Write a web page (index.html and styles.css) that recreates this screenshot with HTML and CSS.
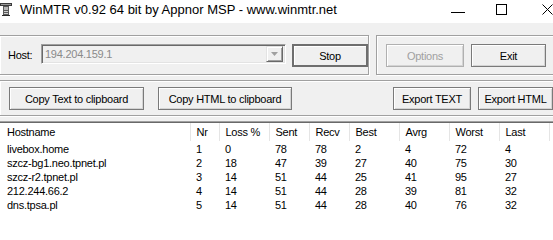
FILE: index.html
```html
<!DOCTYPE html>
<html>
<head>
<meta charset="utf-8">
<link rel="stylesheet" href="styles.css">
</head>
<body>
<div class="win">
  <div class="titlebar">
    <svg class="appicon" width="12" height="14" viewBox="0 0 12 14">
      <rect x="0" y="1" width="12" height="3" fill="#3c3c3c"/>
      <rect x="1" y="2" width="10" height="1" fill="#9a9a9a"/>
      <rect x="3" y="4" width="6" height="9" fill="#5a5a5a"/>
      <rect x="4" y="5" width="4" height="3" fill="#b8b8b8"/>
      <rect x="4" y="9" width="4" height="1" fill="#d0d0d0"/>
      <rect x="4" y="11" width="4" height="1" fill="#d0d0d0"/>
      <rect x="2" y="13" width="8" height="1" fill="#2a2a2a"/>
    </svg>
    <span class="title">WinMTR v0.92 64 bit by Appnor MSP - www.winmtr.net</span>
    <div class="controls">
      <svg class="ctl ctl-min" width="14" height="10" viewBox="0 0 14 10"><rect x="0" y="8" width="14" height="1" fill="#000"/></svg>
      <svg class="ctl ctl-max" width="11" height="11" viewBox="0 0 11 11"><rect x="0.5" y="0.5" width="10" height="10" fill="none" stroke="#000"/></svg>
      <svg class="ctl ctl-close" width="11" height="11" viewBox="0 0 11 11"><path d="M0.5 0.5 L10.5 10.5 M10.5 0.5 L0.5 10.5" stroke="#000" stroke-width="1"/></svg>
    </div>
  </div>

  <div class="row1">
    <div class="group g-host">
      <span class="label">Host:</span>
      <div class="combo">
        <span class="combo-text">194.204.159.1</span>
        <span class="combo-arrow"><svg width="7" height="4" viewBox="0 0 7 4"><path d="M0 0 H7 L3.5 4 Z" fill="#a0a0a0"/></svg></span>
      </div>
      <button class="btn btn-default btn-stop">Stop</button>
    </div>
    <div class="group g-actions">
      <button class="btn btn-disabled btn-options">Options</button>
      <button class="btn btn-exit">Exit</button>
    </div>
  </div>

  <div class="group row2">
    <button class="btn btn-copytext">Copy Text to clipboard</button>
    <button class="btn btn-copyhtml">Copy HTML to clipboard</button>
    <span class="spacer"></span>
    <button class="btn btn-exptext">Export TEXT</button>
    <button class="btn btn-exphtml">Export HTML</button>
  </div>

  <div class="list">
    <table>
      <colgroup>
        <col class="c-host"><col class="c-nr"><col class="c-w50"><col class="c-w40"><col class="c-w40"><col class="c-w50"><col class="c-w50"><col class="c-w50"><col class="c-w50"><col class="c-fill">
      </colgroup>
      <thead>
        <tr><th>Hostname</th><th>Nr</th><th>Loss %</th><th>Sent</th><th>Recv</th><th>Best</th><th>Avrg</th><th>Worst</th><th>Last</th><th class="filler"></th></tr>
      </thead>
      <tbody>
        <tr><td>livebox.home</td><td>1</td><td>0</td><td>78</td><td>78</td><td>2</td><td>4</td><td>72</td><td>4</td><td></td></tr>
        <tr><td>szcz-bg1.neo.tpnet.pl</td><td>2</td><td>18</td><td>47</td><td>39</td><td>27</td><td>40</td><td>75</td><td>30</td><td></td></tr>
        <tr><td>szcz-r2.tpnet.pl</td><td>3</td><td>14</td><td>51</td><td>44</td><td>25</td><td>41</td><td>95</td><td>27</td><td></td></tr>
        <tr><td>212.244.66.2</td><td>4</td><td>14</td><td>51</td><td>44</td><td>28</td><td>39</td><td>81</td><td>32</td><td></td></tr>
        <tr><td>dns.tpsa.pl</td><td>5</td><td>14</td><td>51</td><td>44</td><td>28</td><td>40</td><td>76</td><td>32</td><td></td></tr>
      </tbody>
    </table>
  </div>
</div>
</body>
</html>
```

FILE: styles.css
```css
* { box-sizing: border-box; }
html, body {
  margin: 0;
  padding: 0;
  width: 553px;
  height: 240px;
  overflow: hidden;
  background: #f0f0f0;
}
.win {
  width: 553px;
  height: 240px;
  overflow: hidden;
  font-family: "Liberation Sans", Arial, sans-serif;
  font-size: 11px;
  letter-spacing: -0.25px;
  color: #000;
  display: flex;
  flex-direction: column;
}

/* title bar */
.titlebar {
  height: 23px;
  background: #fff;
  display: flex;
  align-items: flex-start;
  flex: none;
}
.appicon {
  margin-top: 2px;
  margin-left: 0;
  flex: none;
}
.title {
  margin-left: 8px;
  margin-top: 2px;
  font-size: 13px;
  letter-spacing: 0;
  line-height: 16px;
  white-space: nowrap;
}
.controls {
  margin-left: auto;
  display: flex;
  align-items: flex-start;
  margin-top: 4px;
}
.ctl-max { margin-left: 31px; }
.ctl-close { margin-left: 35px; margin-right: 0; }

/* group boxes */
.group {
  border: 1px solid #a0a0a0;
  box-shadow: inset 1px 1px 0 #fff, 1px 1px 0 #fff;
  display: flex;
  align-items: flex-start;
}
.row1 {
  display: flex;
  margin-top: 12px;
  flex: none;
}
.g-host {
  width: 376px;
  height: 40px;
  margin-left: -1px;
  padding: 8px 0 0 0;
}
.g-actions {
  margin-left: 7px;
  width: 200px;
  height: 40px;
  padding: 8px 0 0 9px;
  flex: none;
}
.label {
  margin-left: 8px;
  width: 33px;
  line-height: 20px;
  margin-top: 1px;
}
.combo {
  width: 245px;
  height: 20px;
  background: #f0f0f0;
  border-top: 1px solid #a0a0a0;
  border-left: 1px solid #a0a0a0;
  border-right: 1px solid #fff;
  border-bottom: 1px solid #fff;
  box-shadow: inset 1px 1px 0 #696969, inset -1px -1px 0 #e3e3e3;
  display: flex;
  align-items: center;
  padding: 0 2px 0 3px;
}
.combo-text {
  color: #8a8a8a;
  flex: 1;
  line-height: 16px;
}
.combo-arrow {
  width: 17px;
  height: 16px;
  background: #f0f0f0;
  border-top: 1px solid #e3e3e3;
  border-left: 1px solid #e3e3e3;
  border-right: 1px solid #696969;
  border-bottom: 1px solid #696969;
  box-shadow: inset 1px 1px 0 #fff, inset -1px -1px 0 #a0a0a0;
  display: flex;
  align-items: center;
  justify-content: center;
}

/* buttons */
.btn {
  font: inherit;
  letter-spacing: inherit;
  color: #000;
  height: 23px;
  padding: 0;
  background: #f0f0f0;
  border: 1px solid #7a7a7a;
  box-shadow: inset 1px 1px 0 #fff, inset -1px -1px 0 #d4d4d4;
  flex: none;
  cursor: default;
}
.btn-default {
  border: 2px solid #6e6e6e;
  box-shadow: inset 1px 1px 0 #fff;
}
.btn-disabled {
  color: #a0a0a0;
  border-color: #b0b0b0;
}
.btn-stop { width: 76px; margin-left: 6px; }
.btn-options { width: 78px; }
.btn-exit { width: 75px; margin-left: 7px; }

.row2 {
  margin-top: 5px;
  margin-left: -1px;
  width: 560px;
  height: 36px;
  padding: 6px 0 0 9px;
  flex: none;
}
.btn-copytext { width: 135px; }
.btn-copyhtml { width: 134px; margin-left: 14px; }
.spacer { width: 101px; flex: none; }
.btn-exptext { width: 78px; }
.btn-exphtml { width: 75px; margin-left: 7px; }

/* list view */
.list {
  margin-top: 5px;
  flex: 1;
  background: #fff;
  border-top: 1px solid #a0a0a0;
  box-shadow: inset 0 1px 0 #696969;
  padding-top: 1px;
  overflow: hidden;
}
table {
  border-collapse: collapse;
  table-layout: fixed;
  width: 560px;
  margin-left: 1px;
}
col.c-host { width: 189px; }
col.c-nr { width: 29px; }
col.c-w50 { width: 50px; }
col.c-w40 { width: 40px; }
col.c-fill { width: 12px; }
th {
  font-weight: normal;
  text-align: left;
  height: 18px;
  padding: 1px 0 0 6px;
  border-right: 1px solid #e5e5e5;
  white-space: nowrap;
  overflow: hidden;
  line-height: 17px;
}
td {
  height: 14px;
  padding: 0 0 0 6px;
  line-height: 14px;
  white-space: nowrap;
  overflow: hidden;
}
tbody tr:first-child td { padding-top: 1px; height: 15px; }
```
